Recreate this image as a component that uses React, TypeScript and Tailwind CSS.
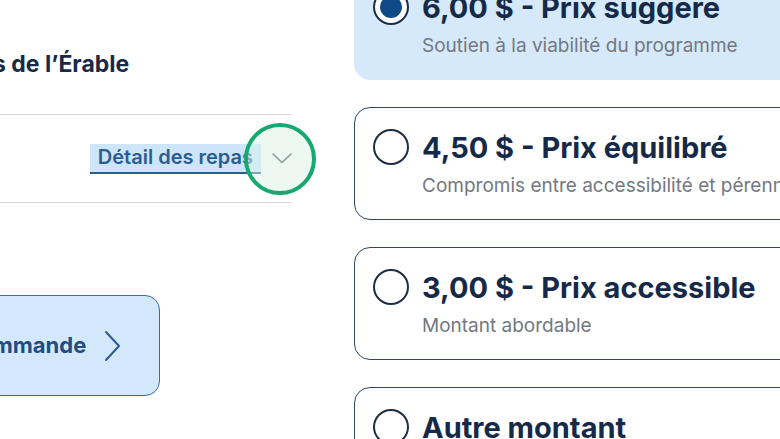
import React from "react";

const OPTIONS = [
  { id: "suggere", title: "6,00 $ - Prix suggéré", sub: "Soutien à la viabilité du programme" },
  { id: "equilibre", title: "4,50 $ - Prix équilibré", sub: "Compromis entre accessibilité et pérennité" },
  { id: "accessible", title: "3,00 $ - Prix accessible", sub: "Montant abordable" },
  { id: "autre", title: "Autre montant", sub: "Choisissez votre contribution" },
];

const FONT = { fontFamily: "Inter, 'Noto Sans', sans-serif" };

function Radio({ checked }: { checked: boolean }) {
  return (
    <span className="flex h-[36px] w-[36px] shrink-0 items-center justify-center rounded-full border-2 border-[#1d2e44] bg-white">
      {checked && <span className="h-[22px] w-[22px] rounded-full bg-[#0f4a86]" />}
    </span>
  );
}

export default function App() {
  const selected = "suggere";

  return (
    <div className="h-[439px] w-[780px] overflow-hidden bg-white" style={FONT}>
      <div className="flex gap-[62px]">
        {/* left column */}
        <div className="-ml-[122px] w-[414px] shrink-0 pt-[50px]">
          <h2 className="whitespace-nowrap text-[23px] font-bold leading-[28px] text-[#182a45]">
            Les Délices de l’Érable
          </h2>

          <div className="mt-[36px] flex h-[89px] items-center justify-end border-y border-[#d6d9de]">
            <span className="mt-[1px] border-b-2 border-[#2c5b92] bg-[#cde5f8] px-[8px] pb-[2px] pt-[1px] text-[20px] font-semibold leading-[25px] text-[#2c5b92]">
              Détail des repas
            </span>
            <span className="relative ml-[11px] flex h-[24px] w-[20px] items-center justify-center">
              <svg width="20" height="11" viewBox="0 0 20 11" fill="none">
                <path d="M1 1 L10 9.5 L19 1" stroke="#3b4250" strokeWidth="1.6" strokeLinecap="round" strokeLinejoin="round" />
              </svg>
              <span className="absolute left-[-28px] top-[-24px] h-[72px] w-[72px] rounded-full border-4 border-[#16a870] bg-[#dcf2e8]/50" />
            </span>
          </div>

          <button className="mt-[92px] flex h-[101px] w-[282px] items-center justify-center gap-[18px] rounded-[15px] border-[1.5px] border-[#3a6aa0] bg-[#d3e9fb] pl-[12px] text-[22px] font-bold text-[#1e4d84]">
            Ma commande
            <svg width="18" height="32" viewBox="0 0 18 32" fill="none">
              <path d="M2 2 L15 16 L2 30" stroke="#2c5b92" strokeWidth="2" strokeLinecap="round" strokeLinejoin="round" />
            </svg>
          </button>
        </div>

        {/* right column */}
        <div className="-mt-[33px] flex w-[460px] shrink-0 flex-col gap-[27px]">
          {OPTIONS.map((o) => {
            const on = o.id === selected;
            return (
              <div
                key={o.id}
                className={
                  on
                    ? "flex h-[113px] items-start gap-[13px] rounded-[16px] border-[1.5px] border-[#d5e9fa] bg-[#d5e9fa] pl-[18px] pt-[21px]"
                    : "flex h-[113px] items-start gap-[13px] rounded-[16px] border-[1.5px] border-[#2f4763] bg-white pl-[18px] pt-[21px]"
                }
              >
                <Radio checked={on} />
                <div className="flex flex-col gap-[8px]">
                  <span className="whitespace-nowrap text-[29px] font-bold leading-[37px] text-[#152949]">
                    {o.title}
                  </span>
                  <span className="whitespace-nowrap text-[19px] leading-[24px] text-[#737881]">{o.sub}</span>
                </div>
              </div>
            );
          })}
        </div>
      </div>
    </div>
  );
}
